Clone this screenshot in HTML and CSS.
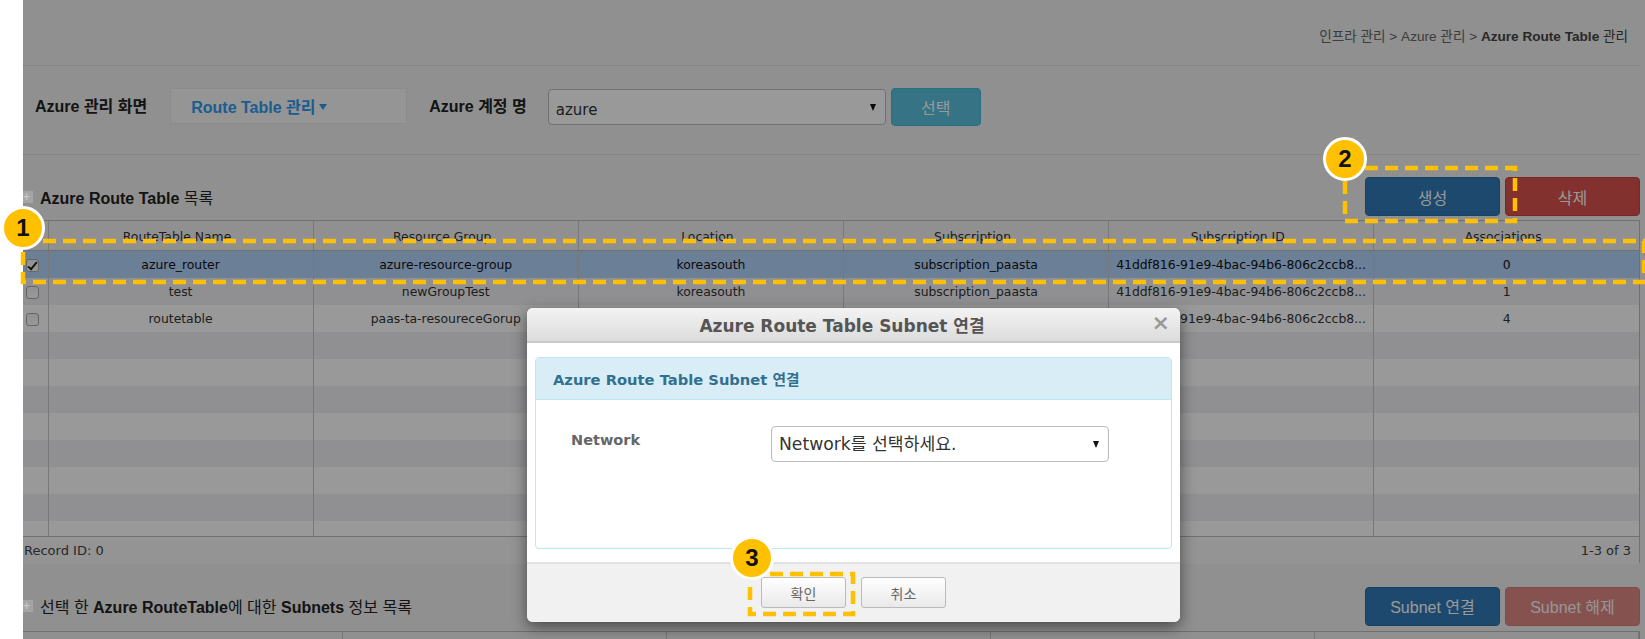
FILE: index.html
```html
<!DOCTYPE html>
<html lang="ko">
<head>
    <meta charset="UTF-8">
    <meta name="viewport" content="width=device-width, initial-scale=1.0">
    <title>Azure Route Table 관리</title>
    <link rel="stylesheet" href="styles.css">
</head>
<body>
    <div class="side"></div>
    <div class="main">
        <div class="breadcrumb">인프라 관리 &gt; Azure 관리 &gt; <b>Azure Route Table</b> <b class="ko">관리</b></div>

        <div class="filter">
            <label class="filter-label">Azure 관리 화면</label>
            <div class="menu-box"><span>Route Table 관리</span><i class="menu-caret"></i></div>
            <label class="filter-label">Azure 계정 명</label>
            <div class="select-wrap account"><select><option>azure</option></select></div>
            <button class="btn btn-info">선택</button>
        </div>

        <div class="section-head first">
            <h2><i class="plus"></i><span><b>Azure Route Table</b> 목록</span></h2>
            <div class="actions">
                <button class="btn btn-primary">생성</button>
                <button class="btn btn-danger">삭제</button>
            </div>
        </div>

        <div class="grid">
            <table>
                <colgroup><col class="col-check"><col><col><col><col><col><col></colgroup>
                <thead>
                    <tr>
                        <th></th>
                        <th>RouteTable Name</th>
                        <th>Resource Group</th>
                        <th>Location</th>
                        <th>Subscription</th>
                        <th>Subscription ID</th>
                        <th>Associations</th>
                    </tr>
                </thead>
                <tbody>
                    <tr class="selected">
                        <td class="check"><input type="checkbox" checked></td>
                        <td>azure_router</td>
                        <td>azure-resource-group</td>
                        <td>koreasouth</td>
                        <td>subscription_paasta</td>
                        <td class="sub-id">41ddf816-91e9-4bac-94b6-806c2ccb8...</td>
                        <td>0</td>
                    </tr>
                    <tr>
                        <td class="check"><input type="checkbox"></td>
                        <td>test</td>
                        <td>newGroupTest</td>
                        <td>koreasouth</td>
                        <td>subscription_paasta</td>
                        <td class="sub-id">41ddf816-91e9-4bac-94b6-806c2ccb8...</td>
                        <td>1</td>
                    </tr>
                    <tr>
                        <td class="check"><input type="checkbox"></td>
                        <td>routetable</td>
                        <td>paas-ta-resoureceGorup</td>
                        <td>koreasouth</td>
                        <td>subscription_paasta</td>
                        <td class="sub-id">41ddf816-91e9-4bac-94b6-806c2ccb8...</td>
                        <td>4</td>
                    </tr>
                    <tr><td></td><td></td><td></td><td></td><td></td><td></td><td></td></tr>
                    <tr><td></td><td></td><td></td><td></td><td></td><td></td><td></td></tr>
                    <tr><td></td><td></td><td></td><td></td><td></td><td></td><td></td></tr>
                    <tr><td></td><td></td><td></td><td></td><td></td><td></td><td></td></tr>
                    <tr><td></td><td></td><td></td><td></td><td></td><td></td><td></td></tr>
                    <tr><td></td><td></td><td></td><td></td><td></td><td></td><td></td></tr>
                    <tr><td></td><td></td><td></td><td></td><td></td><td></td><td></td></tr>
                    <tr class="filler"><td></td><td></td><td></td><td></td><td></td><td></td><td></td></tr>
                </tbody>
            </table>
            <div class="grid-footer">
                <span>Record ID: 0</span>
                <span>1-3 of 3</span>
            </div>
        </div>

        <div class="section-head second">
            <h2><i class="plus"></i><span>선택 한 <b>Azure RouteTable</b>에 대한 <b>Subnets</b> 정보 목록</span></h2>
            <div class="actions">
                <button class="btn btn-primary">Subnet 연결</button>
                <button class="btn btn-danger disabled">Subnet 해제</button>
            </div>
        </div>

        <div class="lower-grid">
            <div></div><div></div><div></div><div></div><div></div>
        </div>
    </div>

    <div class="backdrop"></div>

    <div class="modal">
        <div class="modal-head">
            <span class="modal-title">Azure Route Table Subnet 연결</span>
            <span class="modal-close">×</span>
        </div>
        <div class="modal-body">
            <div class="panel">
                <div class="panel-head">Azure Route Table Subnet 연결</div>
                <div class="panel-body">
                    <label class="field-label">Network</label>
                    <div class="select-wrap network"><select><option>Network를 선택하세요.</option></select></div>
                </div>
            </div>
        </div>
        <div class="modal-foot">
            <button class="btn-plain">확인</button>
            <button class="btn-plain">취소</button>
        </div>
    </div>

    <!-- callouts from the manual -->
    <svg class="callout mark-row" width="1627" height="47"><rect x="3" y="3" width="1621" height="41"/></svg>
    <svg class="callout mark-create" width="176" height="59"><rect x="3" y="3" width="170" height="53"/></svg>
    <svg class="callout mark-ok" width="109" height="46"><rect x="3" y="3" width="103" height="40"/></svg>
    <div class="step step-1">1</div>
    <div class="step step-2">2</div>
    <div class="step step-3">3</div>
</body>
</html>
```

FILE: styles.css
```css
html, body {
    height: 100%;
    overflow: hidden;
}
body {
    margin: 0;
    display: flex;
    position: relative;
    background-color: #fff;
    color: #333;
    font-family: "Liberation Sans", "Noto Sans CJK KR", sans-serif;
}
.side {
    width: 23px;
    flex: none;
}
.main {
    flex: 1;
    min-width: 0;
    height: 639px;
    padding-right: 5px;
    background-color: #eff0ee;
}
.breadcrumb {
    height: 66px;
    box-sizing: border-box;
    padding: 29px 12px 0 0;
    border-bottom: 1px dotted #ccc;
    font-size: 13.6px;
    line-height: 16px;
    text-align: right;
    color: #666;
}
.breadcrumb b {
    color: #444;
}
.breadcrumb .ko {
    font-weight: normal;
}

.filter {
    height: 89px;
    box-sizing: border-box;
    padding: 22px 0 0 12px;
    display: flex;
    align-items: flex-start;
    border-bottom: 1px dotted #ccc;
}
.filter-label {
    font-size: 16px;
    font-weight: bold;
    line-height: 38px;
    color: #222;
}
.menu-box {
    width: 237px;
    height: 36px;
    margin: 0 22px 0 23px;
    padding-left: 20px;
    box-sizing: border-box;
    display: flex;
    align-items: center;
    background-color: #f8f8f8;
    border: 1px solid #e8e8e8;
    color: #2f9bf0;
    font-size: 16px;
    font-weight: bold;
}
.menu-caret {
    margin: 2px 0 0 3px;
    border-top: 6px solid #2f9bf0;
    border-left: 4px solid transparent;
    border-right: 4px solid transparent;
}
.select-wrap {
    position: relative;
}
.select-wrap::after {
    content: "";
    position: absolute;
    top: 50%;
    right: 10px;
    margin-top: -3px;
    border-top: 7px solid #111;
    border-left: 3px solid transparent;
    border-right: 3px solid transparent;
}
.select-wrap select {
    appearance: none;
    width: 100%;
    height: 100%;
    padding: 0 8px;
    box-sizing: border-box;
    background-color: #fff;
    border: 1px solid #bbb;
    border-radius: 4px;
    color: #333;
    font-family: "DejaVu Sans", "Noto Sans CJK KR", sans-serif;
}
.account {
    width: 338px;
    height: 36px;
    margin: 1px 5px 0 21px;
}
.account select {
    font-size: 15px;
    padding-left: 7px;
    padding-top: 5px;
}
.btn {
    border: 1px solid transparent;
    border-radius: 4px;
    color: #fff;
    font-family: "Liberation Sans", "Noto Sans CJK KR", sans-serif;
    font-size: 16px;
}
.btn-info {
    width: 90px;
    height: 38px;
    background-color: #5bc0de;
    border-color: #46b8da;
}
.btn-primary {
    background-color: #337ab7;
    border-color: #2e6da4;
}
.btn-danger {
    background-color: #d9534f;
    border-color: #d43f3a;
}
.btn-danger.disabled {
    opacity: .65;
}

.section-head {
    display: flex;
    justify-content: space-between;
    align-items: center;
}
.section-head h2 {
    margin: 0;
    display: flex;
    align-items: center;
    font-size: 16px;
    font-weight: normal;
    color: #222;
}
.section-head.first {
    padding: 22px 0 4px;
    height: 39px;
}
.section-head.second {
    padding: 23px 0 6px;
    height: 38px;
}
/* sits above the backdrop, it reads lighter than the dimmed page */
.plus {
    width: 10px;
    height: 12px;
    margin-right: 7px;
    background-color: #a4a4a4;
    position: relative;
    z-index: 1;
}
.plus::after {
    content: "+";
    position: absolute;
    left: 0;
    top: -1px;
    font: bold 12px/14px "Liberation Sans", sans-serif;
    color: #c6c6c6;
}
.actions {
    display: flex;
    gap: 5px;
}
.actions .btn {
    width: 135px;
    height: 39px;
}

.grid {
    height: 344px;
    box-sizing: border-box;
    border: 1px solid #bbb;
    border-left: 0;
    border-radius: 0 0 3px 0;
    background-color: #fff;
    font-family: "DejaVu Sans", "Noto Sans CJK KR", sans-serif;
    font-size: 12.4px;
}
.grid table {
    width: 100%;
    table-layout: fixed;
    border-collapse: collapse;
}
.col-check {
    width: 25px;
}
.grid th {
    height: 29px;
    box-sizing: border-box;
    padding: 3px 7px 0 0;
    background-color: #f0f0f0;
    border-bottom: 1px solid #bbb;
    border-right: 1px solid #c8c8c8;
    font-weight: normal;
    color: #333;
    text-align: center;
}
.grid td {
    height: 27px;
    padding: 0;
    border-right: 1px solid #c8c8c8;
    text-align: center;
    color: #333;
    white-space: nowrap;
    overflow: hidden;
}
.grid th:last-child,
.grid td:last-child {
    border-right: 0;
}
.grid tbody tr:nth-child(even) td {
    background-color: #f0f0f3;
}
.grid tbody tr.selected td {
    background-color: #b3d4fc;
    color: #111;
}
.grid tr.filler td {
    height: 15px;
}
.grid td.sub-id {
    text-align: left;
    padding-left: 7px;
}
.grid td.check {
    text-align: left;
    padding-left: 3px;
}
.check input {
    appearance: none;
    position: relative;
    width: 13px;
    height: 13px;
    margin: 0;
    vertical-align: middle;
    background: linear-gradient(#f2f2f2, #fff);
    border: 1px solid #a8a8a8;
    border-radius: 3px;
}
.check input:checked::after {
    content: "";
    position: absolute;
    left: 3px;
    top: 0;
    width: 3px;
    height: 8px;
    border-right: 2px solid #222;
    border-bottom: 2px solid #222;
    transform: rotate(40deg);
}
.grid-footer {
    height: 27px;
    display: flex;
    justify-content: space-between;
    align-items: center;
    padding: 0 8px 0 1px;
    background-color: #f7f7f7;
    border-top: 1px solid #bbb;
    font-size: 13px;
    color: #444;
}
.lower-grid {
    height: 20px;
    display: grid;
    grid-template-columns: 320px repeat(4, 1fr);
    background-color: #fff;
    border: 1px solid #bbb;
    border-left: 0;
}
.lower-grid div {
    background-color: #f0f0f0;
    border-right: 1px solid #c8c8c8;
}

.backdrop {
    position: absolute;
    left: 23px;
    top: 0;
    right: 0;
    bottom: 0;
    background-color: rgba(0, 0, 0, .4);
}
.modal {
    position: absolute;
    left: 527px;
    top: 308px;
    width: 653px;
    height: 314px;
    display: flex;
    flex-direction: column;
    background-color: #fff;
    border-radius: 6px;
    box-shadow: 0 5px 15px rgba(0, 0, 0, .5);
    overflow: hidden;
    font-family: "DejaVu Sans", "Noto Sans CJK KR", sans-serif;
}
.modal-head {
    height: 33px;
    flex: none;
    padding-right: 23px;
    position: relative;
    display: flex;
    justify-content: center;
    align-items: center;
    background: linear-gradient(#f3f3f3, #dcdcdc);
    border-bottom: 2px solid #c9c9c9;
}
.modal-title {
    font-size: 17px;
    font-weight: bold;
    color: #555;
}
.modal-close {
    position: absolute;
    right: 10px;
    top: 3px;
    font-size: 22px;
    line-height: 24px;
    font-weight: bold;
    color: #999;
}
.modal-body {
    flex: 1;
    padding: 14px 8px 0;
}
.panel {
    height: 192px;
    box-sizing: border-box;
    border: 1px solid #bce8f1;
    border-radius: 4px;
}
.panel-head {
    height: 41px;
    padding-left: 17px;
    display: flex;
    align-items: center;
    background-color: #d9edf7;
    border-bottom: 1px solid #bce8f1;
    color: #31708f;
    font-size: 14.7px;
    font-weight: bold;
}
.panel-body {
    padding: 26px 0 0 35px;
    display: flex;
    align-items: flex-start;
}
.field-label {
    width: 200px;
    margin-top: 3px;
    font-size: 14.5px;
    line-height: 22px;
    font-weight: bold;
    color: #666;
}
.network {
    width: 338px;
    height: 36px;
}
.network select {
    font-size: 17.2px;
    padding-left: 7px;
}
.modal-foot {
    height: 60px;
    flex: none;
    box-sizing: border-box;
    padding-top: 13px;
    display: flex;
    justify-content: center;
    align-items: flex-start;
    gap: 15px;
    background-color: #f1f1f1;
    border-top: 2px solid #e2e2e2;
}
.btn-plain {
    width: 85px;
    height: 31px;
    background: linear-gradient(#fff, #e9e9e9);
    border: 1px solid #bbb;
    border-radius: 3px;
    color: #666;
    font-family: "Noto Sans CJK KR", sans-serif;
    font-size: 14px;
}

.callout {
    position: absolute;
}
.callout rect {
    fill: none;
    stroke: #ffc000;
    stroke-width: 4.5;
    stroke-dasharray: 13 7;
}
.mark-row {
    left: 20px;
    top: 238px;
}
.mark-create {
    left: 1342px;
    top: 165px;
}
.mark-ok {
    left: 747px;
    top: 571px;
}
.step {
    position: absolute;
    width: 38px;
    height: 38px;
    border: 3px solid #fff;
    border-radius: 50%;
    display: flex;
    justify-content: center;
    align-items: center;
    background-color: #ffc000;
    color: #111;
    font-size: 24px;
    font-weight: bold;
}
.step-1 {
    left: 1px;
    top: 206px;
}
.step-2 {
    left: 1323px;
    top: 137px;
}
.step-3 {
    left: 730px;
    top: 536px;
}
```
